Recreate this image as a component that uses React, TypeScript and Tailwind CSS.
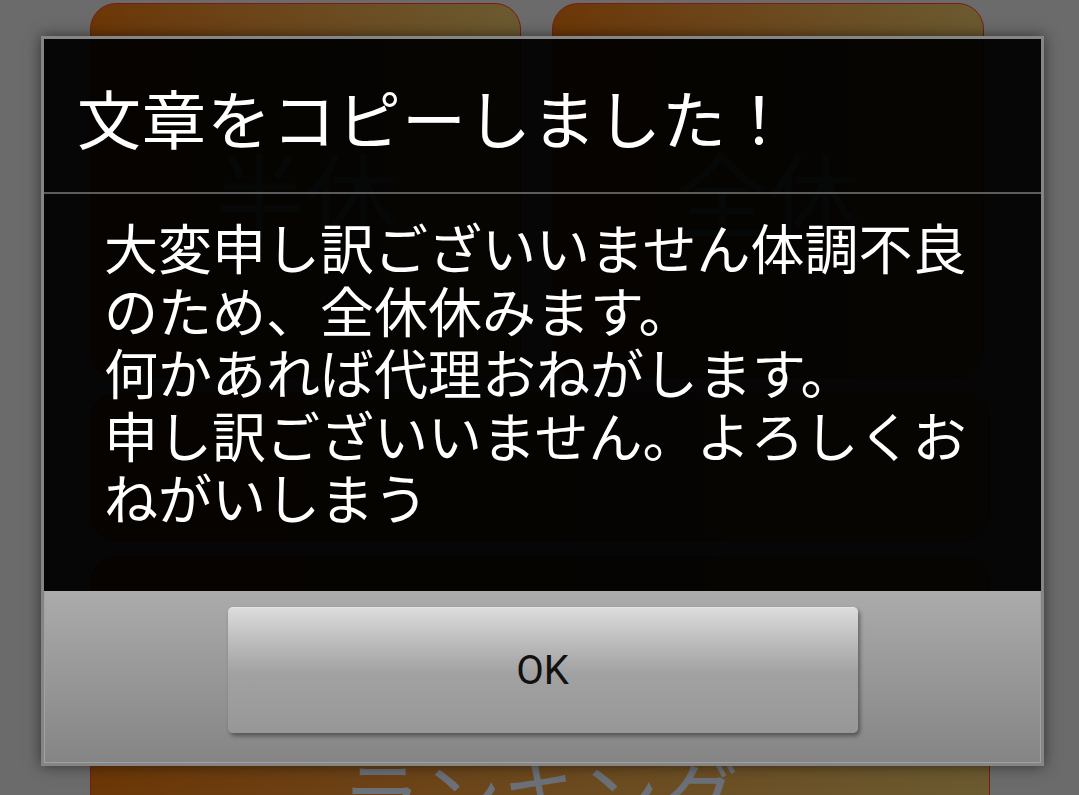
import React from 'react';

const jp = "font-['Noto_Sans_CJK_JP','Noto_Sans_CJK_SC',sans-serif]";

const bodyLines = [
  '大変申し訳ございいません体調不良',
  'のため、全休休みます。',
  '何かあれば代理おねがします。',
  '申し訳ございいません。よろしくお',
  'ねがいしまう',
];

function PageButton({ className, children }: { className: string; children?: React.ReactNode }) {
  return (
    <div
      className={`rounded-[26px] border border-[#7a1c14] bg-gradient-to-r from-[#6c3706] to-[#6b5a30] text-[#6c7078] ${jp} ${className}`}
    >
      {children}
    </div>
  );
}

export default function App() {
  return (
    <div className="relative w-full h-[795px] overflow-hidden bg-[#6b6b6b]">
      {/* dimmed page behind the dialog */}
      <div className="flex flex-col gap-[15px] pl-[90px] pr-[89px] pt-[3px]">
        <div className="flex gap-[31px]">
          <PageButton className="w-[431px] h-[375px] flex items-center justify-center text-[92px] leading-none">
            半休
          </PageButton>
          <PageButton className="w-[432px] h-[375px] flex items-center justify-center text-[92px] leading-none">
            全休
          </PageButton>
        </div>
        <PageButton className="h-[148px]" />
        <PageButton className="h-[330px] pt-[196px] text-center text-[80px] leading-none">
          ランキング
        </PageButton>
      </div>

      {/* dialog */}
      <div className="absolute left-[41px] top-[36px] w-[1003px] h-[730px] border-[3px] border-[#858585] shadow-[0_0_14px_rgba(0,0,0,0.55)] flex flex-col">
        <div className="bg-black/[0.94] flex-1 flex flex-col">
          <div className={`h-[153px] flex items-center pl-[33px] text-white text-[64px] leading-none tracking-[1px] ${jp}`}>
            文章をコピーしました！
          </div>
          <div className="h-[2px] bg-[#5c5c5c]" />
          <div className={`flex-1 pl-[60px] pt-[22px] text-white text-[54px] leading-[62.5px] ${jp}`}>
            {bodyLines.map((l) => (
              <div key={l} className="whitespace-nowrap">
                {l}
              </div>
            ))}
          </div>
        </div>
        <div className="h-[172px] bg-gradient-to-b from-[#ababab] to-[#858585] border-l border-r border-b border-[#a2a2a2] flex justify-center pt-[16px]">
          <div className="w-[630px] h-[126px] rounded-[5px] border-t border-[#e4e4e4] bg-[linear-gradient(to_bottom,#dcdcdc_0%,#b9b9b9_30%,#a2a2a2_52%,#979797_100%)] shadow-[2px_3px_4px_rgba(0,0,0,0.4)] flex items-center justify-center">
            <span className="font-['Roboto',sans-serif] text-[40px] text-[#111] leading-none">OK</span>
          </div>
        </div>
      </div>
    </div>
  );
}
